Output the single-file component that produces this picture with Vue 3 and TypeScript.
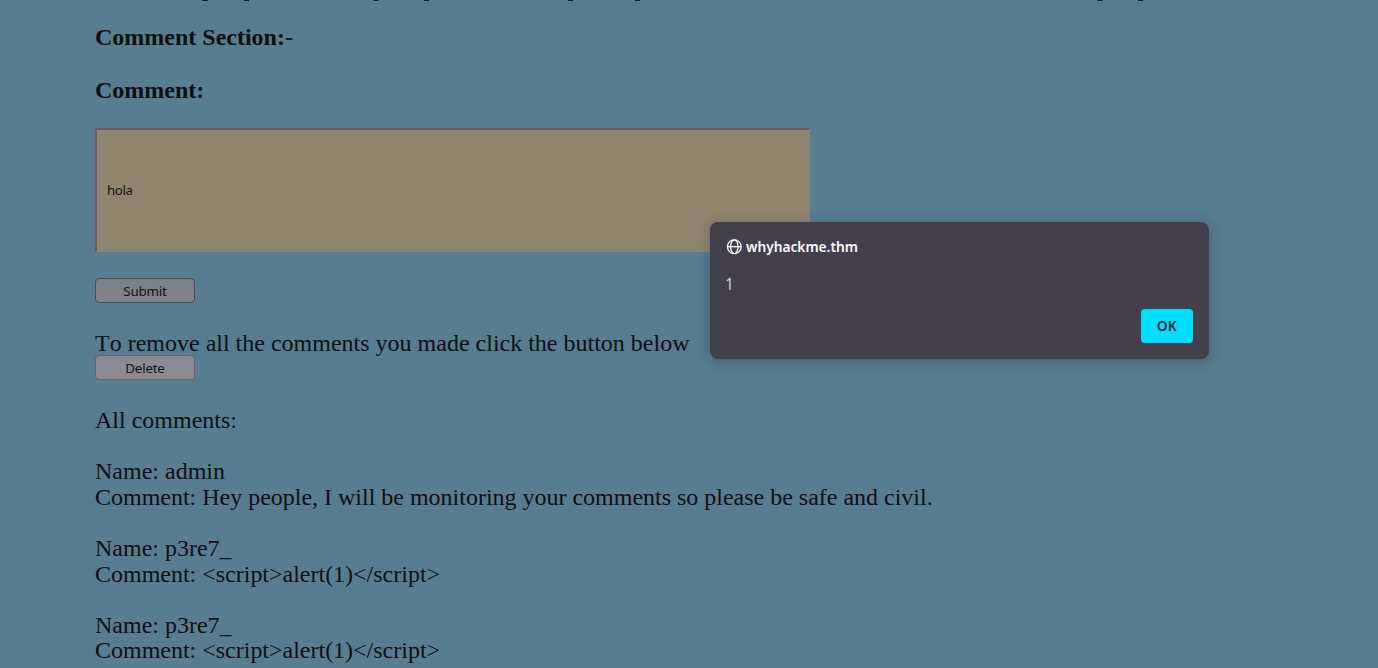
<script setup lang="ts">
interface Entry {
  name: string
  comment: string
}

const entries: Entry[] = [
  { name: 'admin', comment: 'Hey people, I will be monitoring your comments so please be safe and civil.' },
  { name: 'p3re7_', comment: '<script>alert(1)<\/script>' },
  { name: 'p3re7_', comment: '<script>alert(1)<\/script>' },
]

// Tails of the scrolled-off line at the top edge
const tails: number[] = [205, 246.5, 376, 426.5, 570.5, 637.5, 1100, 1140.5]
</script>

<template>
  <main class="page">
    <svg class="tails" width="1378" height="1" aria-hidden="true">
      <rect v-for="x in tails" :key="x" :x="x - 2.5" y="0" width="5" height="1" fill="#111114" />
    </svg>
    <h2 class="heading">Comment Section:-</h2>
    <h2 class="heading label">Comment:</h2>
    <input class="field" type="text" value="hola" />
    <button class="btn submit" type="button">Submit</button>
    <p class="note">To remove all the comments you made click the button below</p>
    <button class="btn delete" type="button">Delete</button>
    <p class="all">All comments:</p>
    <section v-for="(e, i) in entries" :key="i" class="entry">
      <p>Name: {{ e.name }}</p>
      <p class="body">Comment: {{ e.comment }}</p>
    </section>

    <div class="dialog" role="alertdialog">
      <header class="origin">
        <svg width="16" height="16" viewBox="0 0 16 16" fill="none" stroke="#fbfbfe" stroke-width="1.25">
          <circle cx="8.3" cy="7.7" r="6.9" />
          <ellipse cx="8.3" cy="7.7" rx="3.7" ry="6.9" />
          <path d="M1.4 7.7h13.8" />
        </svg>
        <span class="host">whyhackme.thm</span>
      </header>
      <p class="message">1</p>
      <footer class="actions"><button class="ok" type="button"><span>OK</span></button></footer>
    </div>
  </main>
</template>

<style>
html, body { margin: 0; overflow: hidden; background: #577d8f; }
</style>

<style scoped>
.page {
  position: relative;
  box-sizing: border-box;
  width: 1378px;
  height: 668px;
  overflow: hidden;
  padding-left: 95px;
  background: #577d8f;
  color: #0f0f12;
  font-family: "Liberation Serif", "Times New Roman", serif;
  font-size: 24px;
  line-height: 25.6px;
}
p, h2 { margin: 0; }
.tails { display: block; margin-left: -95px; }
.heading { font-size: 24px; line-height: 26px; font-weight: 700; margin-top: 23px; }
.label { margin-top: 27px; }
.field {
  display: block;
  box-sizing: border-box;
  width: 715px;
  height: 124px;
  margin-top: 25px;
  padding: 0 10px 2px;
  border: 2px solid;
  border-color: #645f66 #85848c #85848c #645f66;
  border-width: 2px 1px 1px 2px;
  border-radius: 0;
  background: #918570;
  color: #151518;
  font: 13.333px "Noto Sans", sans-serif;
  letter-spacing: -0.4px;
  outline: 0;
}
.btn {
  display: block;
  box-sizing: border-box;
  width: 100px;
  height: 25px;
  padding: 1px 0 0;
  border: 1px solid #4a4853;
  border-radius: 4px;
  background: #817f87;
  color: #121215;
  font: 13.333px/22px "Noto Sans", sans-serif;
  letter-spacing: -0.2px;
}
.submit { margin-top: 26px; }
.note { margin-top: 28px; height: 24px; font-kerning: none; }
.delete { padding: 0; border-color: #66646e; background: #8c8a91; }
.all { margin-top: 28px; }
.entry { margin-top: 25.6px; }
.body { letter-spacing: -0.01px; }
.dialog {
  position: absolute;
  left: 710px;
  top: 222px;
  box-sizing: border-box;
  width: 499px;
  height: 137px;
  padding: 16px;
  border-radius: 8px;
  background: #43404c;
  color: #fbfbfe;
  box-shadow: 0 2px 14px rgba(20, 25, 35, 0.3);
  font: 15px/18px "Noto Sans", sans-serif;
}
.origin { display: flex; align-items: center; gap: 4px; height: 18px; font-weight: 600; }
.host {
  font-size: 15px;
  line-height: 18px;
  margin-top: -2px;
  white-space: nowrap;
  transform: scaleX(0.915);
  transform-origin: left;
}
.message {
  margin-top: 19px;
  height: 18px;
  color: #d0cfd6;
  font-size: 15.5px;
  transform: translateX(-1px);
}
.actions { display: flex; justify-content: flex-end; margin-top: 16px; }
.ok {
  width: 52px;
  height: 34px;
  padding: 0 0 2px;
  border: 0;
  border-radius: 4px;
  background: #00ddff;
  color: #2b2a33;
  font: 600 15px/32px "Noto Sans", sans-serif;
}
.ok span { display: inline-block; transform: scaleX(0.93); }
</style>
